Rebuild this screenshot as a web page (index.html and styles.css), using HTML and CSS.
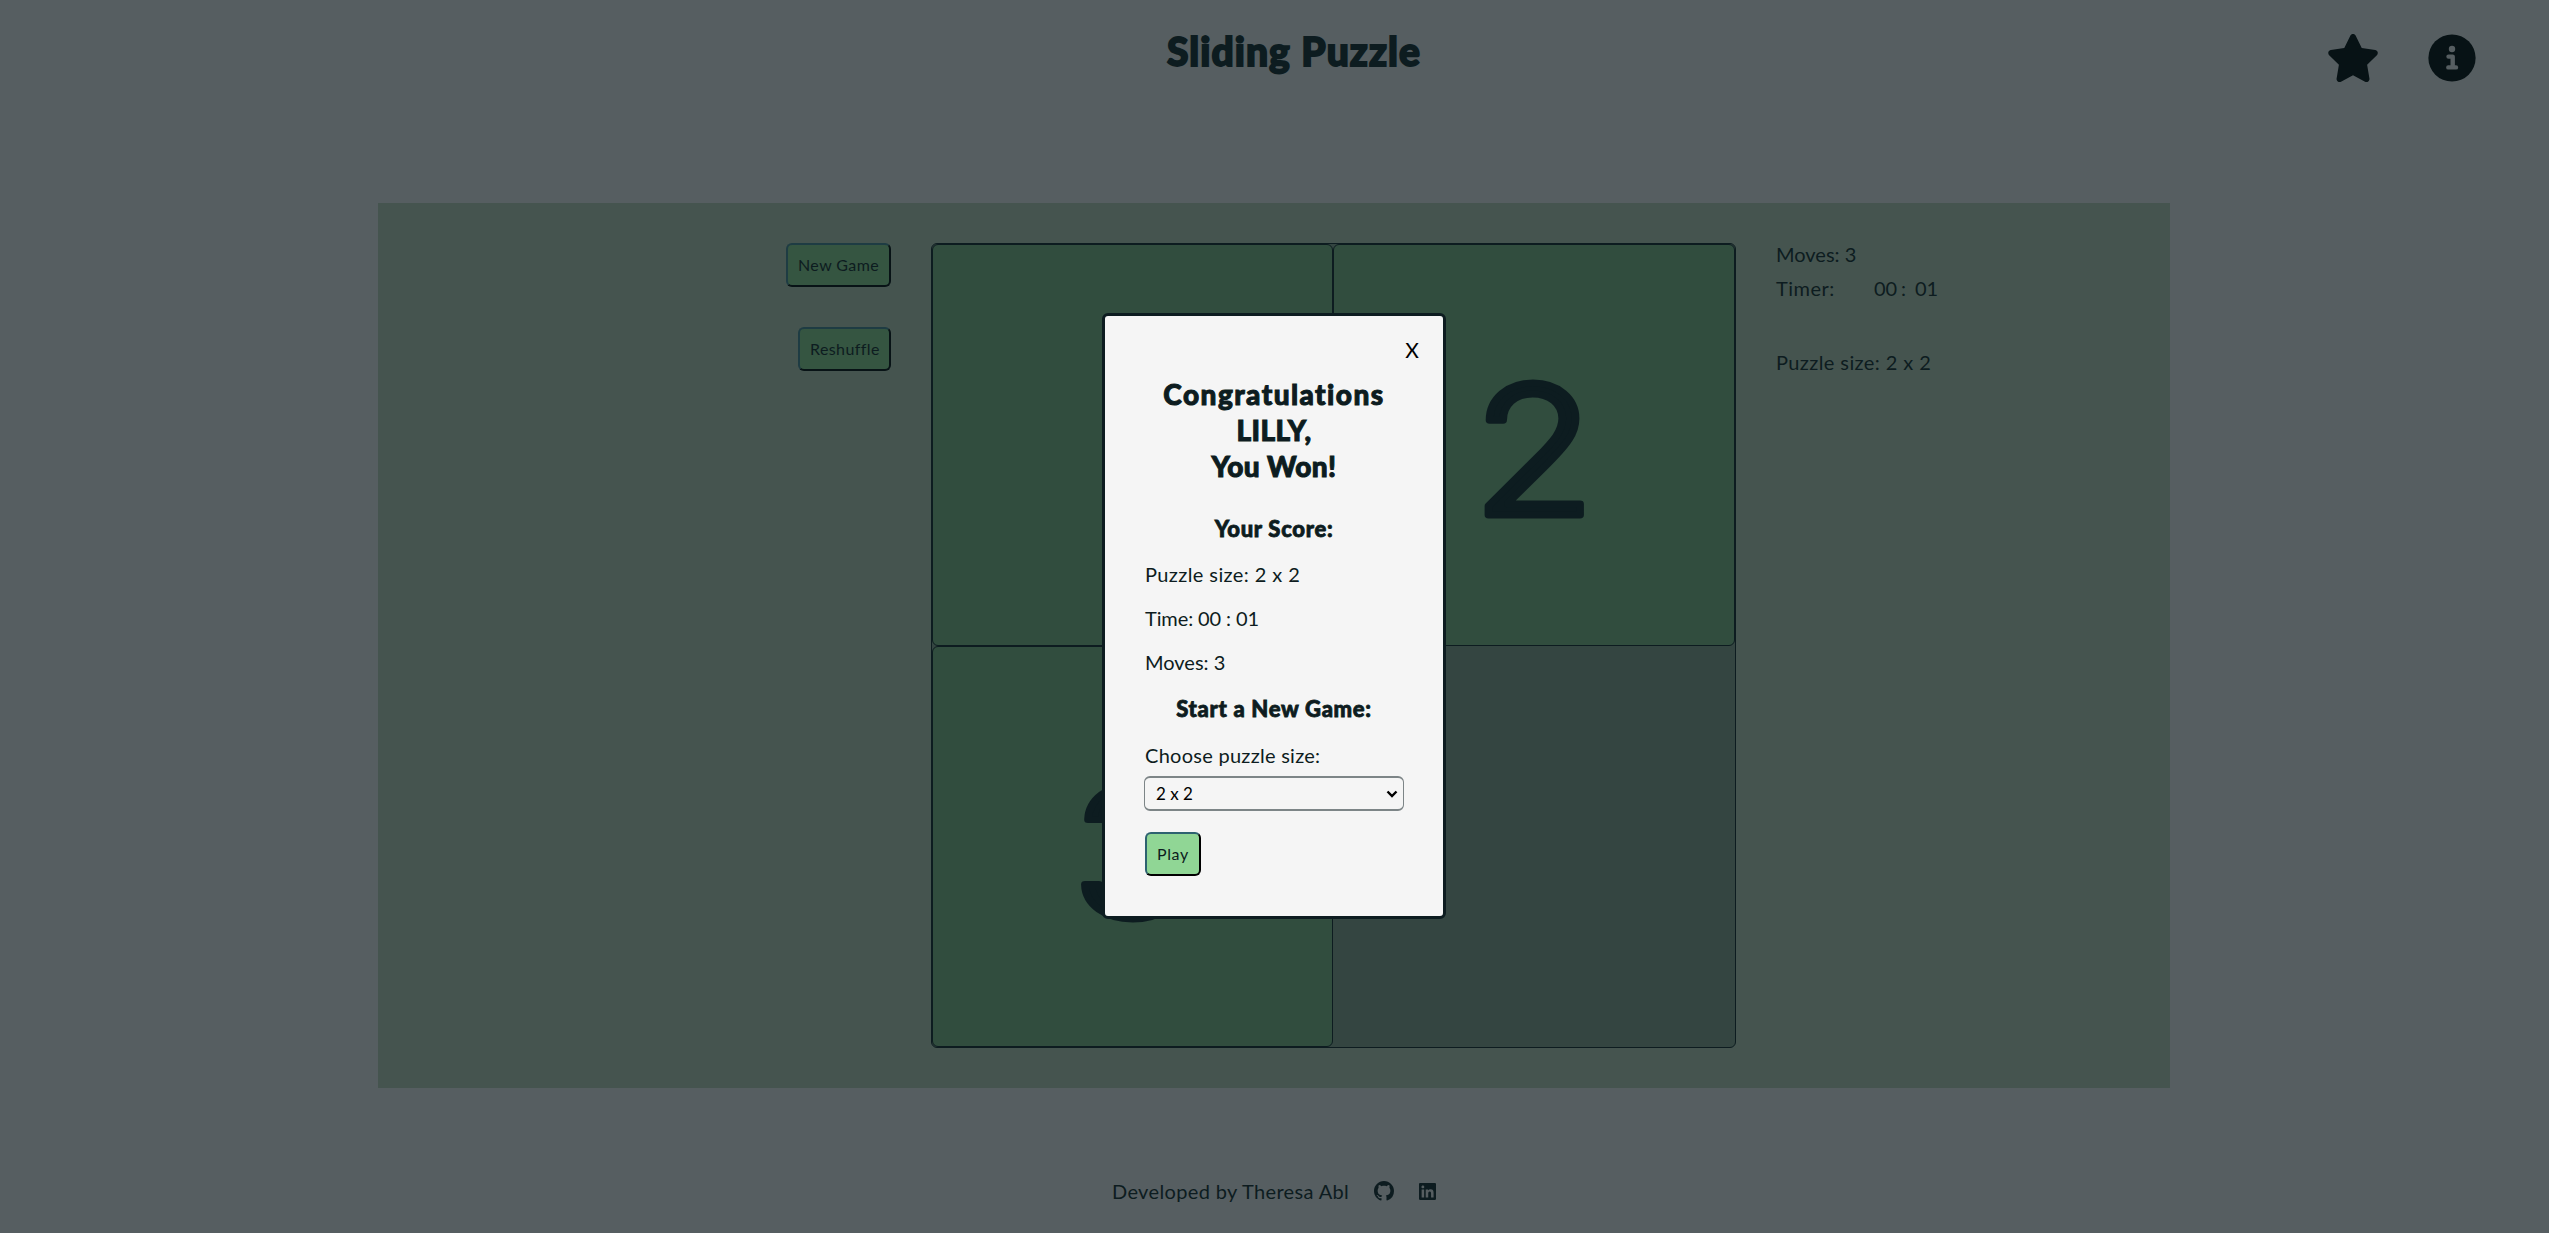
FILE: index.html
```html
<!DOCTYPE html>
<html lang="en">
<head>
<meta charset="utf-8">
<title>Sliding Puzzle</title>
<link rel="stylesheet" href="styles.css">
</head>
<body>
<header class="header">
  <h1 class="title">Sliding Puzzle</h1>
  <nav class="nav">
    <svg class="nav-star" viewBox="0 0 576 512"><path d="M316.9 18C311.6 7 300.4 0 288.1 0s-23.4 7-28.8 18L195 150.3 51.4 171.5c-12 1.8-22 10.2-25.7 21.7s-.7 24.2 7.9 32.7L137.800 329 113.200 474.700c-2 12 3 24.200 12.900 31.300s23 8 33.800 2.300l128.300-68.500 128.300 68.500c10.800 5.700 23.900 4.900 33.800-2.300s14.900-19.300 12.900-31.300L438.500 329 542.700 225.900c8.600-8.500 11.700-21.200 7.900-32.700s-13.700-19.900-25.700-21.700L381.200 150.300 316.900 18z"/></svg>
    <svg class="nav-info" viewBox="0 0 48 48"><circle cx="24" cy="24" r="23.600"/><g class="info-mark"><circle cx="24" cy="15" r="3.200"/><path d="M20.500 22.600H24.700V33.400M20.300 33.400H28"/></g></svg>
  </nav>
</header>
<main class="game">
  <div class="controls">
    <button class="btn new-game">New Game</button>
    <button class="btn reshuffle">Reshuffle</button>
  </div>
  <div class="board">
    <div class="tile"><svg class="digit narrow" viewBox="-200 0 400 400"><text x="0" y="271">1</text></svg></div>
    <div class="tile"><svg class="digit" viewBox="-200 0 400 400"><text x="0" y="271">2</text></svg></div>
    <div class="tile"><svg class="digit" viewBox="-200 0 400 400"><text x="0" y="271">3</text></svg></div>
    <div class="tile empty"></div>
  </div>
  <div class="stats">
    <p class="t-moves">Moves: 3</p>
    <p class="timer"><span class="t-timer">Timer:</span><span class="t-min">00</span><span class="t-colon">:</span><span class="t-sec">01</span></p>
    <p class="t-size stats-size">Puzzle size: 2 x 2</p>
  </div>
</main>
<footer class="footer">
  <span class="credit">Developed by Theresa Abl</span>
  <svg class="github" viewBox="0 0 16 16"><path d="M8 0C3.580 0 0 3.580 0 8c0 3.540 2.290 6.530 5.470 7.590.4.070.55-.17.55-.38 0-.19-.01-.82-.01-1.490-2.010.37-2.530-.49-2.690-.94-.09-.23-.48-.94-.82-1.130-.28-.15-.68-.52-.01-.53.63-.01 1.080.58 1.230.82.72 1.210 1.870.87 2.330.66.07-.52.28-.87.51-1.070-1.780-.2-3.640-.89-3.640-3.950 0-.87.31-1.590.82-2.150-.08-.2-.36-1.020.08-2.120 0 0 .67-.21 2.200.82.64-.18 1.320-.27 2-.27s1.360.09 2 .27c1.530-1.040 2.200-.82 2.200-.82.44 1.100.16 1.920.08 2.120.51.56.82 1.270.82 2.150 0 3.070-1.870 3.750-3.650 3.950.29.25.54.73.54 1.480 0 1.070-.01 1.930-.01 2.200 0 .21.15.46.55.38A8.010 8.010 0 0 0 16 8c0-4.420-3.580-8-8-8z"/></svg>
  <svg class="linkedin" viewBox="0 0 448 448"><path d="M416 0H31.900C14.300 0 0 14.500 0 32.300v383.400C0 433.500 14.300 448 31.900 448H416c17.600 0 32-14.500 32-32.300V32.300C448 14.500 433.600 0 416 0zM135.400 384H69V170.200h66.500V384zM102.200 141c-21.300 0-38.500-17.300-38.500-38.500S80.900 64 102.200 64c21.200 0 38.500 17.300 38.500 38.500 0 21.300-17.200 38.500-38.500 38.500zm282.100 243h-66.400V280c0-24.800-.5-56.700-34.500-56.700-34.600 0-39.900 27-39.900 54.900V384h-66.400V170.200h63.700v29.200h.9c8.900-16.800 30.600-34.500 62.900-34.500 67.200 0 79.700 44.300 79.700 101.900V384z"/></svg>
</footer>
<section class="modal">
  <span class="close">X</span>
  <h2 class="congrats"><span class="winner-lead">Congratulations</span><br>LILLY,<br>You Won!</h2>
  <h3 class="score">Your Score:</h3>
  <p class="t-size">Puzzle size: 2 x 2</p>
  <p class="t-time">Time: 00 : 01</p>
  <p class="t-moves">Moves: 3</p>
  <h3 class="start">Start a New Game:</h3>
  <label class="choose">Choose puzzle size:</label>
  <div class="select"><span class="option">2 x 2</span><svg class="chevron" viewBox="0 0 12 8"><path d="M1.500 1.500L6 6L10.500 1.500"/></svg></div>
  <button class="btn play">Play</button>
</section>
</body>
</html>
```
FILE: styles.css
```css
* { box-sizing: border-box; margin: 0; padding: 0; }
body {
  height: 1233px;
  display: flex;
  flex-direction: column;
  overflow: hidden;
  background: #565e61;
  color: #0d1c20;
  font: 20px/24px Lato, "Noto Sans", sans-serif;
  white-space: nowrap;
}
.header { width: 100%; height: 203px; display: grid; grid-template-columns: 1167px 1fr auto; padding-right: 73px; }
.title { grid-column: 2; padding-top: 27px; font-size: 39px; line-height: 48px; font-weight: 900; letter-spacing: 1.05px; -webkit-text-stroke: 1.8px #0d1c20; }
.nav { display: flex; gap: 48px; padding-top: 34px; fill: #071215; }
.nav-star { width: 54px; height: 48px; }
.nav-info { width: 48px; height: 48px; }
.info-mark { fill: #565e61; }
.info-mark path { fill: none; stroke: #565e61; stroke-width: 4.400; stroke-linecap: round; stroke-linejoin: round; }
.game { width: 1792px; height: 885px; margin-left: 378px; padding-top: 40px; display: grid; grid-template-columns: 513px 805px 1fr; column-gap: 40px; background: #45544f; }
.controls { display: flex; flex-direction: column; align-items: flex-end; gap: 40px; }
.btn { height: 44px; border: 2px solid; border-color: #1e3c43 #081316 #081316 #1e3c43; border-radius: 6px; background: #355541; color: #0d1c20; font: 16px Lato, sans-serif; letter-spacing: 0.4px; text-align: left; padding: 0 0 2px 10px; }
.new-game { width: 105px; }
.reshuffle { width: 93px; }
.board { height: 805px; border: 1px solid #0d1c20; border-radius: 6px; display: grid; grid-template-columns: 401px 402px; grid-template-rows: 402px 401px; background: #344541; }
.tile { border: 1px solid #0d1c20; border-radius: 6px; background: #314d3e; }
.tile.empty { border-color: transparent; background: none; }
.digit { display: block; width: 100%; height: 399px; }
.digit text { font: 300 180px Inter, sans-serif; text-anchor: middle; fill: #0d1c20; stroke: #0d1c20; stroke-width: 7px; stroke-linejoin: round; transform: scaleX(1.12); }
.digit.narrow text { transform: scaleX(0.8); }
.stats { margin-top: -1px; }
.t-size { letter-spacing: 0.4px; }
.t-time { letter-spacing: -0.1px; }
.timer { display: flex; margin-top: 10px; }
.t-timer { width: 98px; letter-spacing: 0.5px; }
.t-min { width: 27px; }
.t-colon { width: 14px; }
.stats-size { margin-top: 50px; }
.footer { margin: 91px 0 0 1112px; height: 24px; width: 324px; display: flex; align-items: center; fill: #0d1c20; }
.credit { width: 262px; letter-spacing: 0.35px; }
.github { flex: none; width: 20px; height: 20px; margin-right: 25px; }
.linkedin { flex: none; width: 17px; height: 17px; }
.modal { position: absolute; left: 1102px; top: 313px; width: 344px; height: 606px; border: 3px solid #0d1c20; border-radius: 6px; background: #f5f5f5; padding: 22px 40px 0; }
.close { display: block; height: 28px; line-height: 24px; margin-right: -16px; text-align: right; color: #000; font-size: 21px; }
.congrats { margin-top: 10px; text-align: center; font-size: 28px; line-height: 36px; font-weight: 900; letter-spacing: 0.4px; -webkit-text-stroke: 1px #0d1c20; }
.winner-lead { letter-spacing: 1.45px; }
.score, .start { text-align: center; font-size: 22px; line-height: 28px; font-weight: 900; letter-spacing: 0.7px; -webkit-text-stroke: 0.8px #0d1c20; }
.score { margin-top: 31px; margin-bottom: 19px; }
.modal p { margin-bottom: 20px; }
.start { margin-top: 21px; margin-bottom: 20px; }
.choose { display: block; letter-spacing: 0.27px; }
.select { height: 35px; width: 260px; margin: 9px 0 21px -1px; display: flex; align-items: center; justify-content: space-between; padding: 0 5px 0 11px; border: 1px solid #7d8587; border-radius: 6px; color: #000; font-size: 17px; border-width: 2px 1px; }
.chevron { width: 12px; height: 8px; fill: none; stroke: #000; stroke-width: 2.400; }
.play { width: 56px; background: #90d695; border-color: #2d6270 #000 #000 #2d6270; letter-spacing: 0.6px; }
```
